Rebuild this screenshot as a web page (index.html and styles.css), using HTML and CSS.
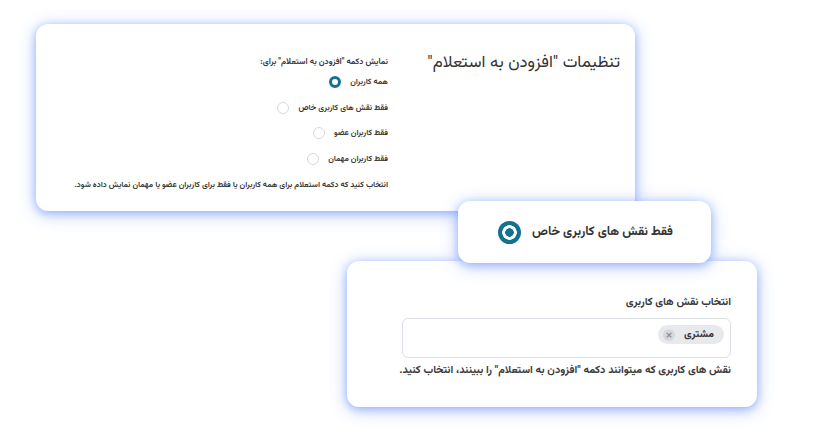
FILE: index.html
```html
<!DOCTYPE html>
<html lang="fa">
<head>
<meta charset="utf-8">
<link rel="stylesheet" href="styles.css">
</head>
<body>
<div class="stage">
  <section class="card settings">
    <h2 class="title">تنظیمات "افزودن به استعلام"</h2>
    <div class="field">
      <div class="label">نمایش دکمه "افزودن به استعلام" برای:</div>
      <div class="options">
        <div class="opt"><span>همه کاربران</span><i class="radio on"></i></div>
        <div class="opt"><span>فقط نقش های کاربری خاص</span><i class="radio"></i></div>
        <div class="opt"><span>فقط کاربران عضو</span><i class="radio"></i></div>
        <div class="opt"><span>فقط کاربران مهمان</span><i class="radio"></i></div>
      </div>
      <p class="desc">انتخاب کنید که دکمه استعلام برای همه کاربران یا فقط برای کاربران عضو یا مهمان نمایش داده شود.</p>
    </div>
  </section>

  <section class="card roles">
    <div class="label2">انتخاب نقش های کاربری</div>
    <div class="select">
      <span class="chip"><span>مشتری</span><i class="x">×</i></span>
    </div>
    <p class="desc2">نقش های کاربری که میتوانند دکمه "افزودن به استعلام" را ببینند، انتخاب کنید.</p>
  </section>

  <div class="card callout">
    <span class="ctext">فقط نقش های کاربری خاص</span>
    <i class="bigradio"></i>
  </div>
</div>
</body>
</html>
```

FILE: styles.css
```css
* { box-sizing: border-box; margin: 0; padding: 0; }
html, body { background: #fff; }
body {
  font-family: "Vazirmatn", "Noto Sans Arabic", "DejaVu Sans", sans-serif;
  color: #3a3a3a;
}
.stage {
  position: relative;
  width: 819px;
  height: 443px;
  padding-top: 24px;
  overflow: hidden;
}
.card {
  background: #fff;
  border-radius: 12px;
  box-shadow: 0 2px 8px rgba(100, 140, 255, 0.55), 0 3px 18px rgba(110, 150, 255, 0.45);
  direction: rtl;
}
.settings {
  margin-left: 36px;
  width: 599px;
  height: 187px;
  display: flex;
  padding: 31px 15px 0 0;
}
.title {
  flex: 0 0 232px;
  font-size: 16.8px;
  font-weight: 400;
  line-height: 18px;
  color: #333;
  margin-top: -1px;
}
.field {
  display: flex;
  flex-direction: column;
  white-space: nowrap;
}
.label {
  font-size: 8.3px;
  font-weight: 700;
  line-height: 14px;
}
.options { display: flex; flex-direction: column; gap: 11.5px; margin-top: 6px; }
.opt {
  display: flex;
  align-items: center;
  gap: 9px;
  font-size: 8px;
  font-weight: 700;
  height: 14px;
}
.radio {
  width: 12px;
  height: 12px;
  border-radius: 50%;
  border: 1px solid #d5d9e0;
  background: #fff;
}
.radio.on {
  border: 3.5px solid #16708f;
}
.desc {
  font-size: 8px;
  font-weight: 700;
  line-height: 14px;
  margin-top: 12px;
  color: #3a3a3a;
}
.roles {
  margin: 50px 0 0 347px;
  width: 410px;
  height: 146px;
  padding: 35px 26px 0 55px;
}
.label2 { font-size: 10.8px; font-weight: 700; line-height: 14px; }
.select {
  margin-top: 8px;
  height: 40px;
  border: 1px solid #dcdfe5;
  border-radius: 6px;
  padding: 6px 6px 0;
  display: flex;
}
.chip {
  display: inline-flex;
  align-items: center;
  gap: 9px;
  height: 19px;
  padding: 0 10px 0 5px;
  background: #e8e9ec;
  border-radius: 10px;
  font-size: 10.5px;
  font-weight: 700;
  color: #333;
}
.x {
  font-style: normal;
  width: 12px;
  height: 12px;
  border-radius: 50%;
  background: #d6d7db;
  color: #888;
  font-size: 9px;
  line-height: 12px;
  text-align: center;
  font-family: "DejaVu Sans", sans-serif;
}
.desc2 { margin-top: 6px; font-size: 10.8px; font-weight: 700; line-height: 14px; white-space: nowrap; }
.callout {
  position: absolute;
  left: 458px;
  top: 201px;
  width: 253px;
  height: 62px;
  display: flex;
  align-items: center;
  padding-right: 38px;
  gap: 11px;
}
.ctext { font-size: 12.6px; font-weight: 700; color: #333; }
.bigradio {
  width: 23px;
  height: 23px;
  border-radius: 50%;
  background: radial-gradient(circle, #16708f 0 4px, #fff 4.5px 7px, #16708f 7.5px);
}
```
